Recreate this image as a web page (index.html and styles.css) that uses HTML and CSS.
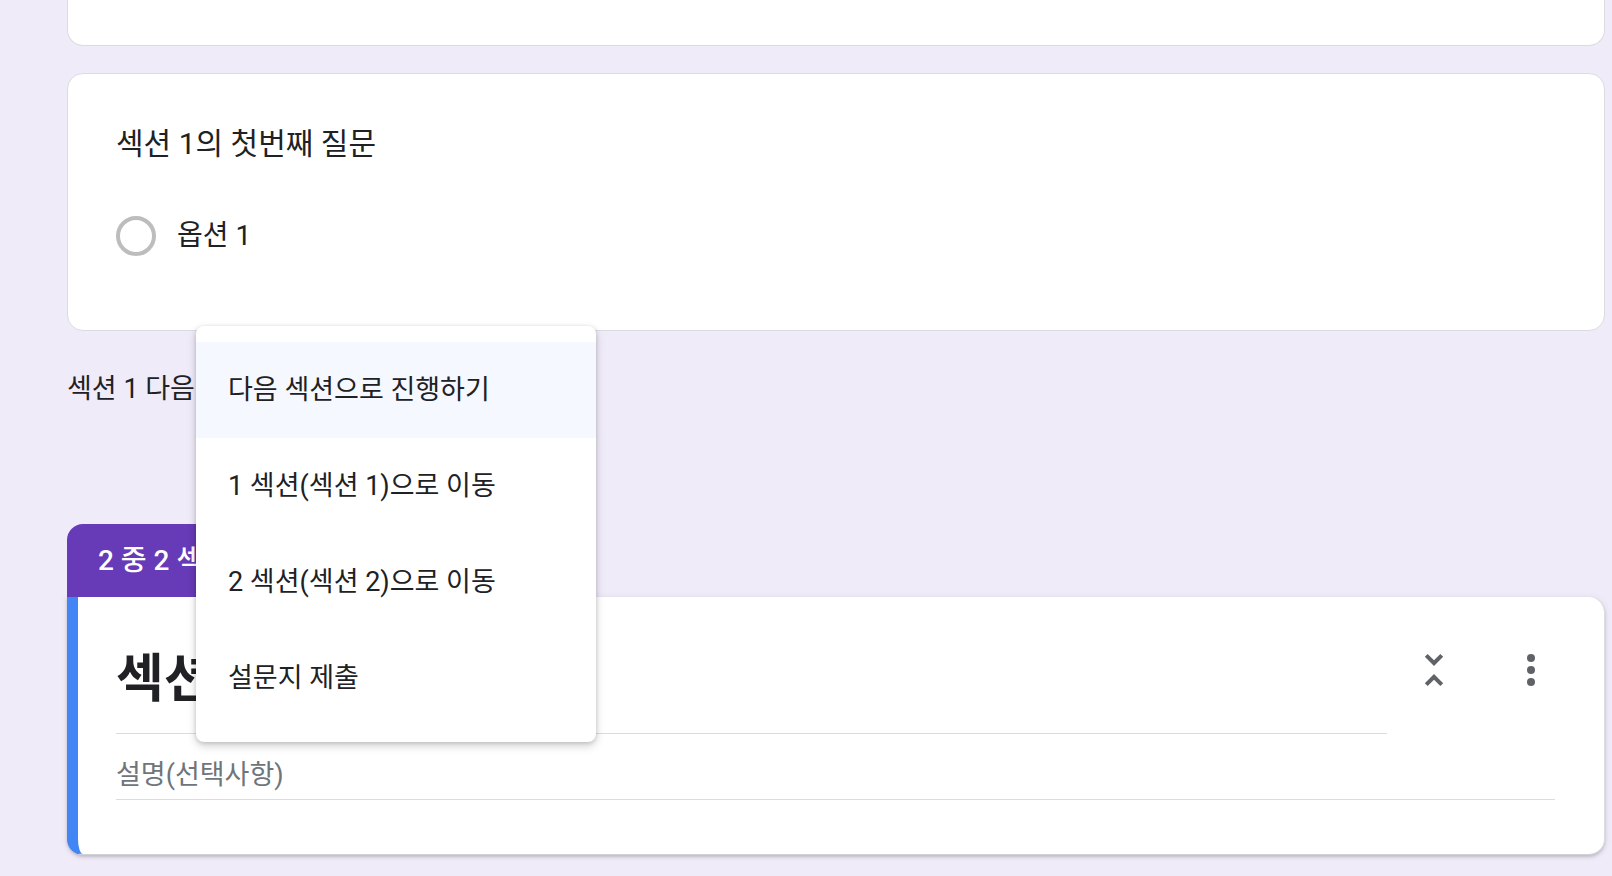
FILE: index.html
```html
<!DOCTYPE html>
<html lang="ko">
<head>
<meta charset="utf-8">
<title>Form</title>
<link rel="stylesheet" href="styles.css">
</head>
<body>
<div class="page">
  <div class="card card-top"></div>

  <div class="card card-question">
    <div class="q-title">섹션 1의 첫번째 질문</div>
    <div class="option">
      <span class="radio"></span>
      <span class="opt-label">옵션 1</span>
    </div>
  </div>

  <div class="after-section">섹션 1 다음</div>

  <div class="section">
    <div class="section-tab">2 중 2 섹션</div>
    <div class="section-card">
      <div class="sc-head">
        <div class="sc-title">섹션 2</div>
        <div class="sc-icons">
          <span class="icon">
            <svg viewBox="0 0 24 24" width="48" height="48"><path fill="#5f6368" d="M7.41 18.59L8.83 20 12 16.83 15.17 20l1.41-1.41L12 14l-4.59 4.59zm9.18-13.18L15.17 4 12 7.17 8.83 4 7.41 5.41 12 10l4.59-4.59z"/></svg>
          </span>
          <span class="icon">
            <svg viewBox="0 0 24 24" width="48" height="48"><circle cx="12" cy="6" r="2" fill="#5f6368"/><circle cx="12" cy="12" r="2" fill="#5f6368"/><circle cx="12" cy="18" r="2" fill="#5f6368"/></svg>
          </span>
        </div>
      </div>
      <div class="sc-desc">설명(선택사항)</div>
    </div>
  </div>

  <div class="menu">
    <div class="menu-item active">다음 섹션으로 진행하기</div>
    <div class="menu-item">1 섹션(섹션 1)으로 이동</div>
    <div class="menu-item">2 섹션(섹션 2)으로 이동</div>
    <div class="menu-item">설문지 제출</div>
  </div>
</div>
</body>
</html>
```

FILE: styles.css
```css
html, body {
  margin: 0;
  padding: 0;
}
body {
  background: #f0ebf8;
  font-family: Roboto, "Noto Sans CJK KR", sans-serif;
  font-feature-settings: "palt";
  color: #202124;
  width: 1612px;
  height: 876px;
  overflow: hidden;
}
.page {
  position: relative;
  padding-left: 67px;
  width: 1538px;
}
.card {
  background: #fff;
  border: 1px solid #dadce0;
  box-sizing: border-box;
}
.card-top {
  height: 46px;
  border-top: 0;
  border-radius: 0 0 16px 16px;
}
.card-question {
  margin-top: 27px;
  height: 258px;
  border-radius: 16px;
  padding: 50px 48px 0 48px;
}
.q-title {
  font-size: 30px;
  line-height: 40px;
  height: 40px;
}
.option {
  display: flex;
  align-items: center;
  gap: 21px;
  margin-top: 52px;
  height: 40px;
}
.radio {
  width: 40px;
  height: 40px;
  box-sizing: border-box;
  border: 4px solid #bdbdbd;
  border-radius: 50%;
}
.opt-label {
  font-size: 28px;
  line-height: 40px;
}
.after-section {
  margin-top: 38px;
  font-size: 27px;
  line-height: 40px;
  height: 40px;
}
.section {
  margin-top: 115px;
}
.section-tab {
  display: inline-block;
  background: #673ab7;
  color: #fff;
  font-size: 28px;
  font-weight: 500;
  line-height: 73px;
  height: 73px;
  padding: 0 31px;
  border-radius: 16px 16px 0 0;
  vertical-align: top;
}
.section-card {
  background: #fff;
  height: 258px;
  box-sizing: border-box;
  border-left: 11px solid #4285f4;
  border-right: 1px solid #dadce0;
  border-bottom: 1px solid #d0d2d6;
  border-radius: 0 16px 16px 16px;
  box-shadow: 0 2px 3px rgba(60, 64, 67, 0.22), 0 1px 6px 1px rgba(60, 64, 67, 0.08);
  padding: 0 49px 0 38px;
}
.sc-head {
  display: flex;
  align-items: flex-start;
}
.sc-title {
  flex: 1;
  font-size: 52px;
  font-weight: 700;
  line-height: 60px;
  padding-top: 53px;
  padding-bottom: 23px;
  border-bottom: 1px solid #dadce0;
}
.sc-icons {
  display: flex;
  gap: 49px;
  margin-left: 23px;
  margin-top: 49px;
}
.icon {
  width: 48px;
  height: 48px;
  display: block;
}
.icon svg {
  display: block;
}
.sc-desc {
  font-size: 27px;
  line-height: 36px;
  color: #70757a;
  padding-top: 23px;
  padding-bottom: 6px;
  border-bottom: 1px solid #dadce0;
}
.menu {
  position: absolute;
  left: 196px;
  top: 326px;
  width: 400px;
  box-sizing: border-box;
  padding: 16px 0;
  background: #fff;
  border-radius: 8px;
  box-shadow: 0 4px 10px rgba(0, 0, 0, 0.18), 0 1px 4px rgba(0, 0, 0, 0.14);
}
.menu-item {
  height: 96px;
  line-height: 96px;
  padding-left: 32px;
  font-size: 27px;
  color: #202124;
}
.menu-item.active {
  background: #f5f8fe;
}
```
